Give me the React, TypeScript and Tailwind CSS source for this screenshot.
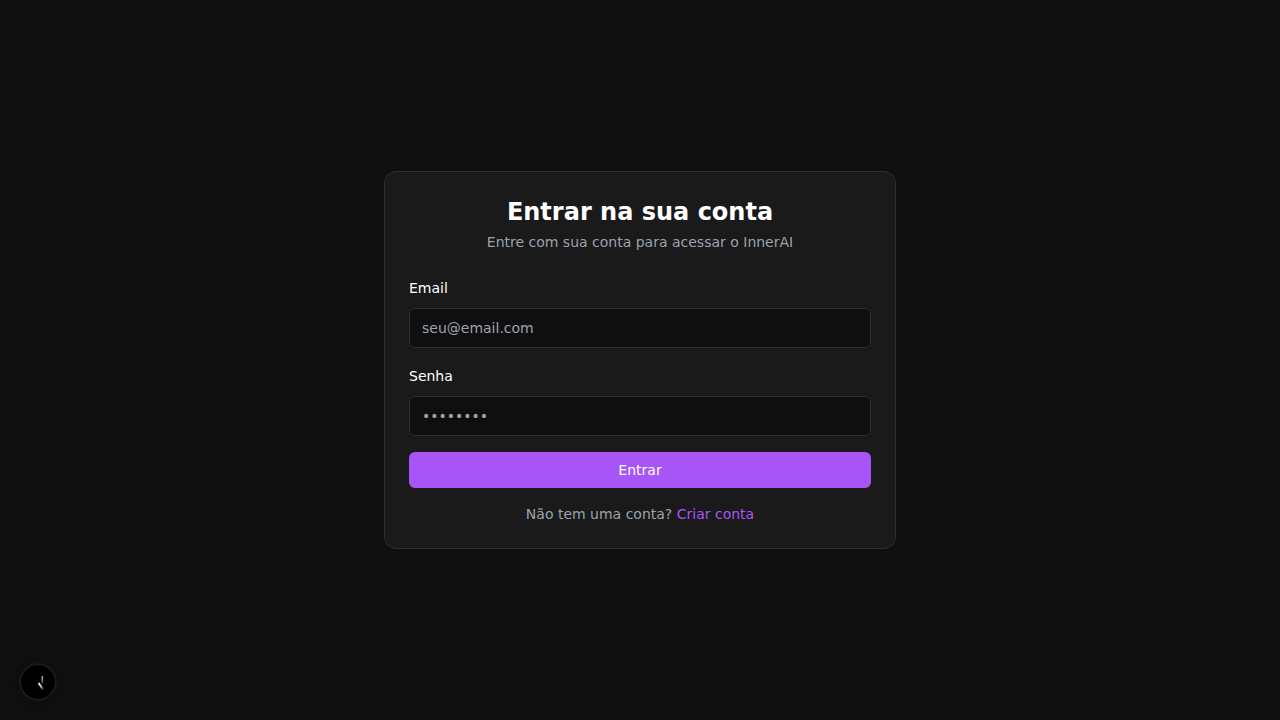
import { useState } from "react";

function DevBadge() {
  return (
    <button
      type="button"
      aria-label="Open developer tools"
      className="fixed bottom-5 left-5 flex size-9 items-center justify-center rounded-full bg-black shadow-[0_0_0_1px_#171717,inset_0_0_0_1px_#242424,0_2px_8px_rgba(0,0,0,0.2)]"
    >
      <svg width="36" height="36" viewBox="0 0 36 36" fill="none" aria-hidden="true">
        <defs>
          <linearGradient id="stem" x1="22" y1="12" x2="22" y2="20" gradientUnits="userSpaceOnUse">
            <stop stopColor="#fff" stopOpacity="0.6" />
            <stop offset="0.5" stopColor="#fff" stopOpacity="0.55" />
            <stop offset="1" stopColor="#fff" stopOpacity="0.1" />
          </linearGradient>
          <linearGradient id="leg" x1="18" y1="19" x2="23" y2="26" gradientUnits="userSpaceOnUse">
            <stop stopColor="#fff" />
            <stop offset="0.5" stopColor="#fff" stopOpacity="0.8" />
            <stop offset="1" stopColor="#fff" stopOpacity="0.1" />
          </linearGradient>
        </defs>
        <path d="M22.3 12V20" stroke="url(#stem)" strokeWidth="1.7" />
        <path d="M18.6 19L23.2 25.8" stroke="url(#leg)" strokeWidth="2" />
      </svg>
    </button>
  );
}

const inputClass =
  "h-10 w-full rounded-md border border-[#2e2e2e] bg-[#0f0f0f] px-3 py-2 text-sm text-white outline-none placeholder:text-[#9ca3af] focus:border-purple-500";

export default function App() {
  const [email, setEmail] = useState("");
  const [password, setPassword] = useState("");

  return (
    <div className="flex min-h-screen items-center justify-center bg-[#0f0f0f] font-['DejaVu_Sans',sans-serif] text-white">
      <main className="w-full max-w-lg rounded-xl border border-[#2e2e2e] bg-[#1a1a1a] p-6">
        <header className="mb-6 flex flex-col gap-1 text-center">
          <h1 className="text-2xl font-bold">Entrar na sua conta</h1>
          <p className="text-sm text-[#9ca3af]">Entre com sua conta para acessar o InnerAI</p>
        </header>
        <form className="flex flex-col gap-4" onSubmit={(e) => e.preventDefault()}>
          <div className="flex flex-col gap-2">
            <label htmlFor="email" className="text-sm leading-6">
              Email
            </label>
            <input
              id="email"
              type="email"
              placeholder="seu@email.com"
              value={email}
              onChange={(e) => setEmail(e.target.value)}
              className={inputClass}
            />
          </div>
          <div className="flex flex-col gap-2">
            <label htmlFor="password" className="text-sm leading-6">
              Senha
            </label>
            <input
              id="password"
              type="password"
              placeholder="••••••••"
              value={password}
              onChange={(e) => setPassword(e.target.value)}
              className={inputClass}
            />
          </div>
          <button type="submit" className="h-9 w-full rounded-md bg-[#a855f7] text-sm text-white">
            Entrar
          </button>
          <p className="text-center text-sm text-[#9ca3af]">
            Não tem uma conta?{" "}
            <a href="#criar-conta" className="text-[#a855f7] hover:underline">
              Criar conta
            </a>
          </p>
        </form>
      </main>
      <DevBadge />
    </div>
  );
}
